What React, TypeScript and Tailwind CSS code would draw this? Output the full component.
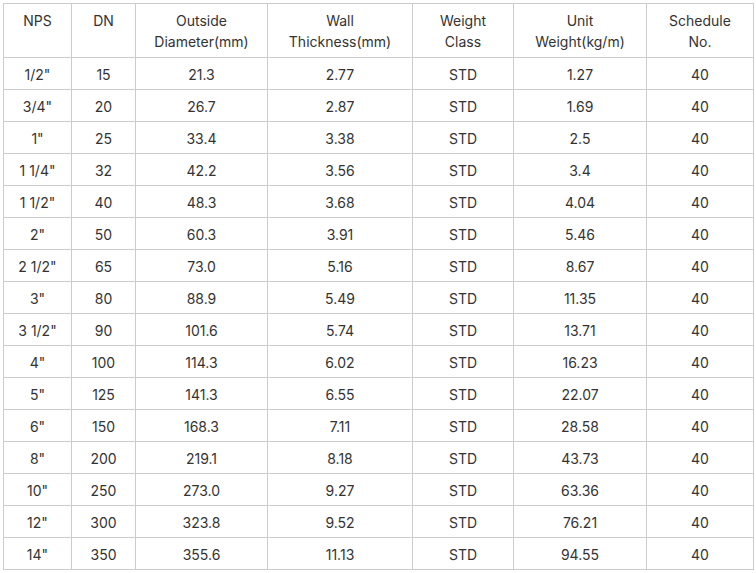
import React from "react";

const headers = [
  ["NPS"],
  ["DN"],
  ["Outside", "Diameter(mm)"],
  ["Wall", "Thickness(mm)"],
  ["Weight", "Class"],
  ["Unit", "Weight(kg/m)"],
  ["Schedule", "No."],
];

const rows: string[][] = [
  ['1/2"', "15", "21.3", "2.77", "STD", "1.27", "40"],
  ['3/4"', "20", "26.7", "2.87", "STD", "1.69", "40"],
  ['1"', "25", "33.4", "3.38", "STD", "2.5", "40"],
  ['1 1/4"', "32", "42.2", "3.56", "STD", "3.4", "40"],
  ['1 1/2"', "40", "48.3", "3.68", "STD", "4.04", "40"],
  ['2"', "50", "60.3", "3.91", "STD", "5.46", "40"],
  ['2 1/2"', "65", "73.0", "5.16", "STD", "8.67", "40"],
  ['3"', "80", "88.9", "5.49", "STD", "11.35", "40"],
  ['3 1/2"', "90", "101.6", "5.74", "STD", "13.71", "40"],
  ['4"', "100", "114.3", "6.02", "STD", "16.23", "40"],
  ['5"', "125", "141.3", "6.55", "STD", "22.07", "40"],
  ['6"', "150", "168.3", "7.11", "STD", "28.58", "40"],
  ['8"', "200", "219.1", "8.18", "STD", "43.73", "40"],
  ['10"', "250", "273.0", "9.27", "STD", "63.36", "40"],
  ['12"', "300", "323.8", "9.52", "STD", "76.21", "40"],
  ['14"', "350", "355.6", "11.13", "STD", "94.55", "40"],
];

export default function App() {
  return (
    <div className="bg-white w-[756px] h-[573px] pt-[3px] pl-[3px]" style={{ fontFamily: "Inter, 'Liberation Sans', sans-serif" }}>
      <div className="grid grid-cols-[67px_63px_131px_144px_100px_132px_106px] gap-px bg-[#cccccc] p-px w-fit text-[14px] text-[#333333]">
        {headers.map((h, i) => (
          <div key={"h" + i} className="bg-white h-[53px] pt-[6px] flex flex-col items-center justify-start leading-[21px] text-center">
            {h.map((l, j) => (
              <span key={j}>{l}</span>
            ))}
          </div>
        ))}
        {rows.map((r, ri) =>
          r.map((c, ci) => (
            <div key={ri + "-" + ci} className="bg-white h-[31px] pt-[2px] flex items-center justify-center">
              {c}
            </div>
          ))
        )}
      </div>
    </div>
  );
}
